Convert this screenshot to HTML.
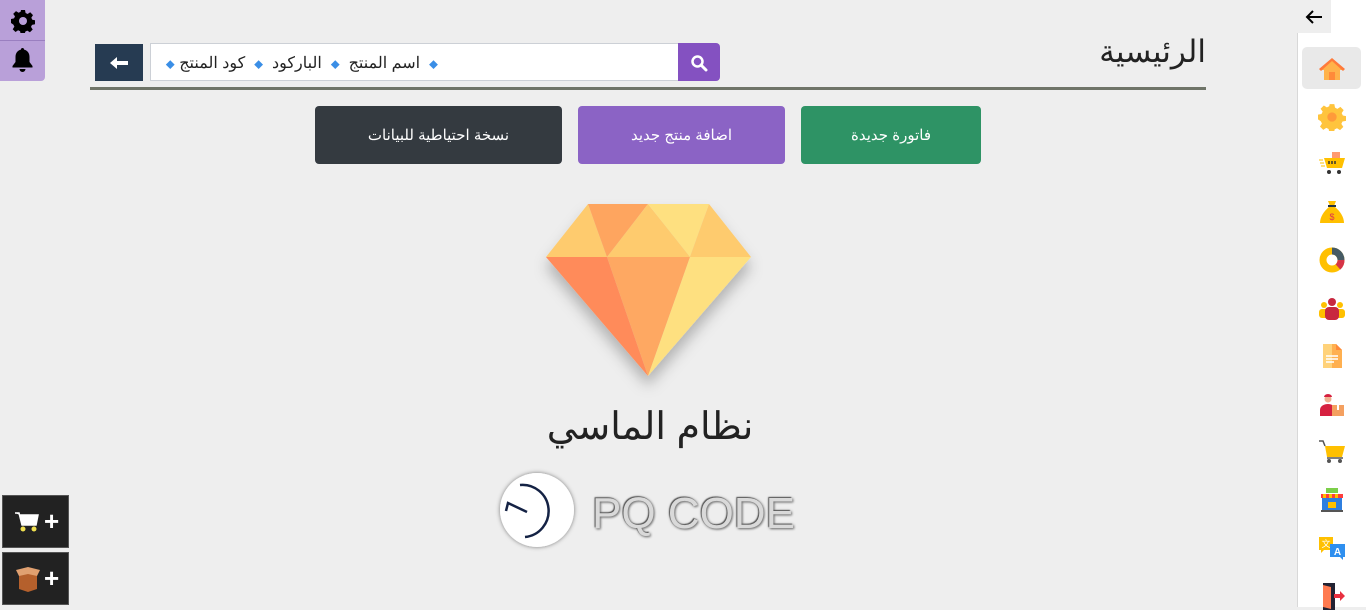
<!DOCTYPE html>
<html><head><meta charset="utf-8"><style>
*{margin:0;padding:0;box-sizing:border-box}
body{width:1366px;height:607px;background:#eeeeee;position:relative;overflow:hidden;font-family:"Liberation Sans","Noto Sans CJK SC",sans-serif}
.abs{position:absolute}
.side{left:1297px;top:0;width:69px;height:607px;background:#fff;border-left:1px solid #d8d8d8}
.ico{position:absolute;left:1318px;width:28px;height:28px}
.btn{position:absolute;top:106px;height:58px;border-radius:4px;color:#fff;font-size:15px;display:flex;align-items:center;justify-content:center}
.ar{font-family:"Liberation Sans","Noto Sans CJK SC",sans-serif}
</style></head><body>
<div class="abs" style="left:0;top:0;width:45px;height:81px;background:#b9a0d9;border-radius:0 0 4px 0"></div>
<div class="abs" style="left:0;top:40px;width:45px;height:1px;background:#9a7fc0"></div>
<svg class="abs" style="left:11px;top:9px" width="24" height="24" viewBox="0 0 24 24"><path fill="#000" d="M10 1h4l.6 3 2 1 2.6-1.7 2.8 2.8L20.3 8.7l1 2 2.7.6v4l-3 .6-1 2 1.7 2.6-2.8 2.8-2.6-1.7-2 1-.6 2.7h-4l-.6-3-2-1-2.6 1.7-2.8-2.8 1.7-2.6-1-2L0 14v-4l3-.6 1-2L2.2 4.9 5 2.1l2.6 1.7 2-1z"/><circle cx="12" cy="12" r="4" fill="#b9a0d9"/></svg>
<svg class="abs" style="left:11px;top:47px" width="23" height="26" viewBox="0 0 23 26"><path fill="#000" d="M11.5 1c1 0 1.6.7 1.6 1.6 3.5.8 5.4 3.6 5.4 7.4v5l3 4v1.5H1.5V19l3-4v-5c0-3.8 1.9-6.6 5.4-7.4 0-.9.6-1.6 1.6-1.6z M8.5 22h6a3 3 0 0 1-6 0z"/></svg>

<div class="abs ar" style="right:160px;top:34px;font-size:31px;color:#222">الرئيسية</div>
<div class="abs" style="left:90px;top:87px;width:1116px;height:3px;background:#6f7468"></div>
<div class="abs" style="left:95px;top:44px;width:48px;height:37px;background:#263b52"></div>
<svg class="abs" style="left:110px;top:56px" width="18" height="14" viewBox="0 0 18 14"><path fill="#fff" d="M0 7 7 1v4h11v4H7v4z"/></svg>
<div class="abs" style="left:150px;top:43px;width:530px;height:38px;background:#fff;border:1px solid #ccd0d6"></div>
<div class="abs" style="left:678px;top:43px;width:42px;height:38px;background:#8451c1;border-radius:0 4px 4px 0"></div>
<svg class="abs" style="left:690px;top:54px" width="18" height="18" viewBox="0 0 18 18"><circle cx="7.5" cy="7.5" r="5" fill="none" stroke="#fff" stroke-width="2.5"/><path d="M11 11l5 5" stroke="#fff" stroke-width="3" stroke-linecap="round"/></svg>
<div class="abs ar" style="left:146px;top:53px;width:292px;font-size:16px;color:#222;white-space:nowrap;direction:rtl;text-align:right;">
<span style="color:#3a8ee6;font-size:9px">◆</span>&nbsp; اسم المنتج &nbsp;<span style="color:#3a8ee6;font-size:9px">◆</span>&nbsp; الباركود &nbsp;<span style="color:#3a8ee6;font-size:9px">◆</span>&nbsp; كود المنتج <span style="color:#3a8ee6;font-size:9px">◆</span></div>

<div class="btn ar" style="left:801px;width:180px;background:#2e9365">فاتورة جديدة</div>
<div class="btn ar" style="left:578px;width:207px;background:#8b63c5">اضافة منتج جديد</div>
<div class="btn ar" style="left:315px;width:247px;background:#343a40">نسخة احتياطية للبيانات</div>

<svg class="abs" style="left:530px;top:190px" width="240" height="220" viewBox="530 190 240 220">
<defs><filter id="sh" x="-30%" y="-30%" width="160%" height="160%"><feDropShadow dx="0" dy="10" stdDeviation="7" flood-color="#000" flood-opacity=".25"/></filter></defs>
<g filter="url(#sh)">
<polygon points="588,204 546,257 607,257" fill="#fecb6e"/>
<polygon points="588,204 648,204 607,257" fill="#fea55f"/>
<polygon points="648,204 607,257 690,257" fill="#fecb6e"/>
<polygon points="648,204 709,204 690,257" fill="#fee080"/>
<polygon points="709,204 751,257 690,257" fill="#fecb6e"/>
<polygon points="546,257 607,257 648,376" fill="#ff8b5a"/>
<polygon points="607,257 690,257 648,376" fill="#fea862"/>
<polygon points="690,257 751,257 648,376" fill="#fee080"/>
</g></svg>
<div class="abs ar" style="left:500px;top:404px;width:300px;text-align:center;font-size:38px;color:#222">نظام الماسي</div>

<svg class="abs" style="left:495px;top:468px" width="84" height="84" viewBox="0 0 84 84">
<defs><filter id="s2"><feDropShadow dx="0" dy="0" stdDeviation="2" flood-opacity=".5"/></filter></defs>
<circle cx="42" cy="42" r="37" fill="#fff" filter="url(#s2)"/>
<path d="M25 17 A26 26 0 1 1 30 69" fill="none" stroke="#142244" stroke-width="2.5"/>
<path d="M11 43 L13 35 L32 44" stroke="#142244" stroke-width="2.5" fill="none"/>
</svg>
<div class="abs" style="left:592px;top:489px;font-size:44px;font-weight:normal;color:#d9d9d9;text-shadow:-1px -1px 1px #555,1px 1px 2px #777,0 0 3px #999;font-family:'Liberation Sans',sans-serif">PQ CODE</div>

<div class="abs" style="left:2px;top:495px;width:67px;height:53px;background:#222;border:1px solid #555"></div>
<div class="abs" style="left:2px;top:552px;width:67px;height:53px;background:#222;border:1px solid #555"></div>
<svg class="abs" style="left:14px;top:511px" width="26" height="22" viewBox="0 0 26 22"><path d="M1 2h4l3 12h14l2-10H6" fill="#fff" stroke="#fff" stroke-width="1.5"/><circle cx="9" cy="18" r="2.5" fill="#f0e050"/><circle cx="20" cy="18" r="2.5" fill="#f0e050"/></svg>
<div class="abs" style="left:44px;top:506px;color:#fff;font-size:26px;font-weight:bold">+</div>
<svg class="abs" style="left:14px;top:566px" width="28" height="26" viewBox="0 0 28 26"><path d="M5 8h18v15l-9 3-9-3z" fill="#b5602c"/><path d="M2 4l12 4 12-4-12-3z M2 4l3 6 9-2z M26 4l-3 6-9-2z" fill="#e0a070"/></svg>
<div class="abs" style="left:44px;top:563px;color:#fff;font-size:26px;font-weight:bold">+</div>

<div class="abs side"></div>
<div class="abs" style="left:1297px;top:0;width:34px;height:33px;background:#eee"></div>
<svg class="abs" style="left:1305px;top:10px" width="18" height="14" viewBox="0 0 18 14"><path d="M17 7H2M8 1 2 7l6 6" stroke="#000" stroke-width="2" fill="none"/></svg>
<div class="abs" style="left:1302px;top:47px;width:59px;height:42px;background:#e9e9e9;border-radius:5px"></div>
<svg class="ico" style="top:55px" viewBox="0 0 28 28"><path d="M14 4 2 15h4v10h16V15h4z" fill="#ffb24a"/><path d="M14 3 1 14l2 2L14 6l11 10 2-2z" fill="#ff7a3a"/><rect x="11" y="17" width="6" height="8" fill="#ff8a3a"/></svg>
<svg class="ico" style="top:103px" viewBox="0 0 24 24"><path fill="#ffc43d" d="M10 1h4l.6 3 2 1 2.6-1.7 2.8 2.8L20.3 8.7l1 2 2.7.6v4l-3 .6-1 2 1.7 2.6-2.8 2.8-2.6-1.7-2 1-.6 2.7h-4l-.6-3-2-1-2.6 1.7-2.8-2.8 1.7-2.6-1-2L0 14v-4l3-.6 1-2L2.2 4.9 5 2.1l2.6 1.7 2-1z"/><circle cx="12" cy="12" r="4" fill="#ff9a3a"/></svg>
<svg class="ico" style="top:150px" viewBox="0 0 28 28"><rect x="14" y="2" width="8" height="7" fill="#ff9a70"/><path d="M6 8h21l-3 10H9z" fill="#ffc000"/><path d="M1 10h4M2 13h4M3 16h4" stroke="#ffc000"/><circle cx="11" cy="22" r="2" fill="#333"/><circle cx="21" cy="22" r="2" fill="#333"/><path d="M11 11v3M14 11v3M17 11v3" stroke="#333" stroke-width="1.5"/></svg>
<svg class="ico" style="top:198px" viewBox="0 0 28 28"><path d="M10 3h8l-2 5h-4z" fill="#ffc000"/><rect x="10" y="7" width="8" height="2" fill="#234"/><path d="M11 9h6c5 4 9 10 9 16H2c0-6 4-12 9-16z" fill="#ffc000"/><text x="14" y="22" font-size="9" text-anchor="middle" fill="#e03050" font-family="Liberation Sans">$</text></svg>
<svg class="ico" style="top:246px" viewBox="0 0 28 28"><circle cx="14" cy="14" r="9" fill="none" stroke="#ffc000" stroke-width="7"/><path d="M14 5a9 9 0 0 1 9 9" stroke="#455a64" stroke-width="7" fill="none"/><path d="M23 14a9 9 0 0 1-3 7" stroke="#d63447" stroke-width="7" fill="none"/></svg>
<svg class="ico" style="top:294px" viewBox="0 0 28 28"><circle cx="6" cy="11" r="3" fill="#ffc000"/><circle cx="22" cy="11" r="3" fill="#ffc000"/><rect x="1" y="15" width="10" height="9" rx="3" fill="#ffc000"/><rect x="17" y="15" width="10" height="9" rx="3" fill="#ffc000"/><circle cx="14" cy="8" r="4" fill="#c8283f"/><rect x="7" y="13" width="14" height="13" rx="4" fill="#c8283f"/></svg>
<svg class="ico" style="top:342px" viewBox="0 0 28 28"><path d="M5 2h13l6 6v18H5z" fill="#ffd27a"/><path d="M14 2h4l6 6v18H14z" fill="#ffb050"/><path d="M18 2v6h6" fill="#ff8a3a"/><path d="M8 14h12M8 17h12M8 20h8" stroke="#fff" stroke-width="1.5"/></svg>
<svg class="ico" style="top:390px" viewBox="0 0 28 28"><circle cx="10" cy="9" r="3.5" fill="#f0b090"/><path d="M6 7a4 3 0 0 1 8 0z" fill="#d62040"/><path d="M2 26v-6c0-4 4-6 8-6s6 2 6 4v8z" fill="#d62040"/><rect x="14" y="15" width="12" height="11" fill="#f4a060"/><rect x="19" y="15" width="2" height="5" fill="#fff"/></svg>
<svg class="ico" style="top:438px" viewBox="0 0 28 28"><path d="M1 3h4l2 5" stroke="#555" stroke-width="1.5" fill="none"/><path d="M7 8h20l-3 11H9z" fill="#ffc000"/><path d="M9 20h16" stroke="#555" stroke-width="1.5"/><circle cx="11" cy="23" r="2" fill="#555"/><circle cx="22" cy="23" r="2" fill="#555"/></svg>
<svg class="ico" style="top:486px" viewBox="0 0 28 28"><rect x="8" y="2" width="12" height="5" fill="#7ccf4a"/><path d="M3 8h22v4H3z" fill="#ff3d3d"/><path d="M5 8h3v4H5zM11 8h3v4h-3zM17 8h3v4h-3z" fill="#ffc000"/><rect x="4" y="12" width="20" height="12" fill="#2f7fdf"/><rect x="10" y="16" width="8" height="6" fill="#ffc000"/><rect x="3" y="24" width="22" height="2" fill="#555"/></svg>
<svg class="ico" style="top:534px" viewBox="0 0 28 28"><path d="M1 3h14v13H6l-3 3v-3H1z" fill="#ffc000"/><text x="8" y="13" font-size="9" text-anchor="middle" fill="#fff" font-family="Noto Sans CJK SC">文</text><path d="M12 10h15v13h-2v3l-3-3H12z" fill="#2f8fef"/><text x="19.5" y="21" font-size="10" text-anchor="middle" fill="#fff" font-weight="bold" font-family="Liberation Sans">A</text></svg>
<svg class="ico" style="top:582px" viewBox="0 0 28 28"><rect x="5" y="1" width="12" height="27" fill="#223"/><path d="M5 3l8 2v22l-8-2z" fill="#ff7a50"/><path d="M16 12h6v-3l5 5-5 5v-3h-6z" fill="#e83040"/></svg>
</body></html>
